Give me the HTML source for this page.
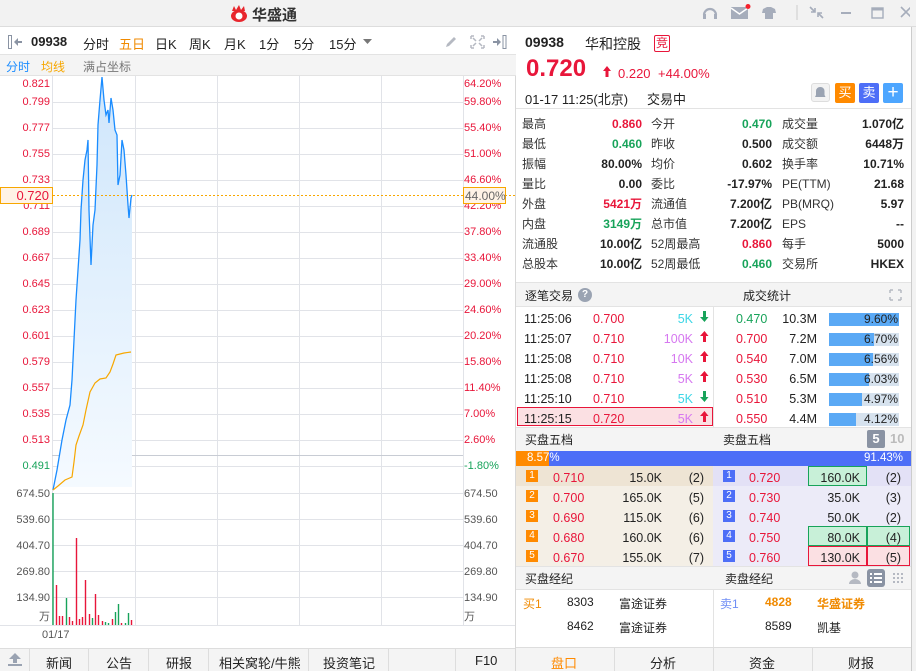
<!DOCTYPE html>
<html><head><meta charset="utf-8"><style>
*{margin:0;padding:0;box-sizing:border-box}
body{width:916px;height:671px;overflow:hidden;background:#fff;font-family:"Liberation Sans","Noto Sans CJK SC",sans-serif;font-size:12px;color:#222;position:relative}
.a{position:absolute;white-space:nowrap}
.r{color:#e8163a}.g{color:#17a35a}.b{color:#1a8cff}.o{color:#f08a00}.gr{color:#777}
.tl{text-align:right}
</style></head><body>
<div class="a" style="left:0;top:0;width:916px;height:27px;background:#f2f2f2;border-bottom:1px solid #ddd"></div>
<svg class="a" style="left:228px;top:5px" width="22" height="17" viewBox="0 0 22 17"><path d="M3 11a8 6 0 1 0 16 0a8 6 0 1 0 -16 0z" fill="#e8262d"/><circle cx="11" cy="11" r="3.5" fill="#fff"/><path d="M4 6l2-5 2 4 3-5 2 5 3-4 1 5" fill="#e8262d"/></svg>
<div class="a" style="left:252px;top:4px;font-size:15px;font-weight:bold;color:#333">华盛通</div>
<svg class="a" style="left:700px;top:4px" width="210" height="18" viewBox="0 0 210 18">
<path d="M4 11a6 6 0 0 1 12 0" fill="none" stroke="#a6adbb" stroke-width="2.2"/><rect x="3" y="10" width="3" height="5" fill="#a6adbb"/><rect x="14" y="10" width="3" height="5" fill="#a6adbb"/>
<rect x="31" y="3" width="17" height="12" fill="#a6adbb"/><path d="M31 4l8.5 6 8.5-6" fill="none" stroke="#fff" stroke-width="1.5"/><circle cx="48" cy="2.5" r="2.5" fill="#f5222d"/>
<path d="M63 5l4-2h4l4 2 1 4-3 0v6h-8v-6l-3 0z" fill="#a6adbb"/>
<line x1="97" y1="1" x2="97" y2="16" stroke="#ccc"/>
<path d="M110 3l5 5M115 4v4h-4M123 14l-5-5M118 13v-4h4" stroke="#a6adbb" stroke-width="1.6" fill="none"/>
<rect x="141" y="8" width="10" height="2" fill="#a6adbb"/>
<rect x="172" y="4" width="11" height="10" fill="none" stroke="#a6adbb" stroke-width="1.4"/><rect x="172" y="4" width="11" height="2.5" fill="#a6adbb"/>
<path d="M201 3l10 10M211 3l-10 10" stroke="#a6adbb" stroke-width="1.6"/></svg>
<div class="a" style="left:911px;top:27px;width:5px;height:644px;background:#f2f2f2;border-left:1px solid #ccc"></div>

<div class="a" style="left:0;top:27px;width:516px;height:28px;background:#fff;border-bottom:1px solid #e3e3e3"></div>
<svg class="a" style="left:8px;top:35px" width="16" height="14"><rect x="0.5" y="0.5" width="3" height="13" fill="none" stroke="#8a93a3"/><path d="M6 7l4-4v8z" fill="#8a93a3"/><rect x="9" y="6" width="5" height="2" fill="#8a93a3"/></svg>
<div class="a" style="left:31px;top:34px;font-weight:bold;font-size:13px">09938</div>
<div class="a" style="left:83px;top:34px;font-size:13px">分时</div>
<div class="a o" style="left:119px;top:34px;font-size:13px">五日</div>
<div class="a" style="left:155px;top:34px;font-size:13px">日K</div>
<div class="a" style="left:189px;top:34px;font-size:13px">周K</div>
<div class="a" style="left:224px;top:34px;font-size:13px">月K</div>
<div class="a" style="left:259px;top:34px;font-size:13px">1分</div>
<div class="a" style="left:294px;top:34px;font-size:13px">5分</div>
<div class="a" style="left:329px;top:34px;font-size:13px">15分</div>
<svg class="a" style="left:363px;top:39px" width="9" height="6"><path d="M0 0h9l-4.5 5z" fill="#777"/></svg>
<svg class="a" style="left:444px;top:35px" width="64" height="14"><path d="M2 12l1-3 7-7 2 2-7 7z" fill="#b5b9c2"/><path d="M27 1h3M27 1v3M40 1h-3M40 1v3M27 13h3M27 13v-3M40 13h-3M40 13v-3M29 3l3 3M38 3l-3 3M29 11l3-3M38 11l-3-3" stroke="#b5b9c2" stroke-width="1.5"/><rect x="59" y="0.5" width="3" height="13" fill="none" stroke="#8a93a3"/><path d="M57 7l-4-4v8z" fill="#8a93a3"/><rect x="49" y="6" width="5" height="2" fill="#8a93a3"/></svg>
<div class="a" style="left:0;top:55px;width:516px;height:21px;background:#f4f4f4;border-bottom:1px solid #e3e3e3"></div>
<div class="a b" style="left:6px;top:58px">分时</div>
<div class="a" style="left:41px;top:58px;color:#f7a700">均线</div>
<div class="a gr" style="left:83px;top:58px">满占坐标</div>

<svg class="a" style="left:0;top:76px" width="516" height="595" viewBox="0 76 516 595">
<defs><linearGradient id="f" x1="0" y1="0" x2="0" y2="1"><stop offset="0" stop-color="#cfe6fb"/><stop offset="1" stop-color="#f5faff"/></linearGradient></defs>
<g stroke="#e1e3e8" stroke-width="1">
<line x1="52.5" y1="76" x2="52.5" y2="625"/><line x1="135.5" y1="76" x2="135.5" y2="625"/><line x1="217.5" y1="76" x2="217.5" y2="625"/><line x1="299.5" y1="76" x2="299.5" y2="625"/><line x1="381.5" y1="76" x2="381.5" y2="625"/><line x1="463.5" y1="76" x2="463.5" y2="625"/>
<line x1="52" y1="102.5" x2="463" y2="102.5"/><line x1="52" y1="128.5" x2="463" y2="128.5"/><line x1="52" y1="154.5" x2="463" y2="154.5"/><line x1="52" y1="180.5" x2="463" y2="180.5"/><line x1="52" y1="206.5" x2="463" y2="206.5"/><line x1="52" y1="232.5" x2="463" y2="232.5"/><line x1="52" y1="258.5" x2="463" y2="258.5"/><line x1="52" y1="284.5" x2="463" y2="284.5"/><line x1="52" y1="310.5" x2="463" y2="310.5"/><line x1="52" y1="336.5" x2="463" y2="336.5"/><line x1="52" y1="362.5" x2="463" y2="362.5"/><line x1="52" y1="388.5" x2="463" y2="388.5"/><line x1="52" y1="414.5" x2="463" y2="414.5"/><line x1="52" y1="440.5" x2="463" y2="440.5"/><line x1="52" y1="466.5" x2="463" y2="466.5"/>
<line x1="52" y1="493.5" x2="463" y2="493.5"/><line x1="52" y1="519.5" x2="463" y2="519.5"/><line x1="52" y1="545.5" x2="463" y2="545.5"/><line x1="52" y1="571.5" x2="463" y2="571.5"/><line x1="52" y1="597.5" x2="463" y2="597.5"/>
<line x1="0" y1="625.5" x2="516" y2="625.5"/>
</g>
<line x1="52" y1="455.5" x2="463" y2="455.5" stroke="#c8ccd4"/>
<path d="M53 490L57 470L62 440L66 420L70 405L72 380L74 340L76 300L78 270L80 240L81 210L83 180L85 160L87 150L88 140L89 210L91 265L93 225L95 210L97 165L98 125L100 100L102 77L104 100L106 115L108 110L109 123L111 98L113 110L115 130L117 135L118 185L120 175L122 140L124 150L126 175L128 205L129 218L131 198L132 195L132 487L53 487Z" fill="url(#f)"/>
<path d="M53 490L57 470L62 440L66 420L70 405L72 380L74 340L76 300L78 270L80 240L81 210L83 180L85 160L87 150L88 140L89 210L91 265L93 225L95 210L97 165L98 125L100 100L102 77L104 100L106 115L108 110L109 123L111 98L113 110L115 130L117 135L118 185L120 175L122 140L124 150L126 175L128 205L129 218L131 198L132 195" fill="none" stroke="#1a8cff" stroke-width="1.3"/>
<path d="M53 490L58 486L65 480L72 477L74 462L76 445L79 436L83 425L86 410L90 392L95 383L100 379L106 378L110 372L113 364L116 355L120 354L124 353L131 352" fill="none" stroke="#f7a700" stroke-width="1.2"/>
<line x1="53" y1="195.5" x2="516" y2="195.5" stroke="#f7a700" stroke-dasharray="2,2"/>
<g stroke-width="1.4">
<line x1="53" y1="493" x2="53" y2="625" stroke="#17a35a"/>
<line x1="56.5" y1="585" x2="56.5" y2="625" stroke="#e8163a"/><line x1="59.5" y1="616" x2="59.5" y2="625" stroke="#e8163a"/><line x1="62.5" y1="616" x2="62.5" y2="625" stroke="#e8163a"/><line x1="66.5" y1="598" x2="66.5" y2="625" stroke="#17a35a"/><line x1="69.5" y1="617" x2="69.5" y2="625" stroke="#e8163a"/><line x1="72.5" y1="621" x2="72.5" y2="625" stroke="#e8163a"/><line x1="76.5" y1="538" x2="76.5" y2="625" stroke="#e8163a"/><line x1="79.5" y1="619" x2="79.5" y2="625" stroke="#e8163a"/><line x1="82.5" y1="617" x2="82.5" y2="625" stroke="#e8163a"/><line x1="85.5" y1="580" x2="85.5" y2="625" stroke="#e8163a"/><line x1="89.5" y1="614" x2="89.5" y2="625" stroke="#e8163a"/><line x1="92.5" y1="618" x2="92.5" y2="625" stroke="#17a35a"/><line x1="95.5" y1="594" x2="95.5" y2="625" stroke="#e8163a"/><line x1="98.5" y1="615" x2="98.5" y2="625" stroke="#e8163a"/><line x1="102.5" y1="621" x2="102.5" y2="625" stroke="#e8163a"/><line x1="105.5" y1="622" x2="105.5" y2="625" stroke="#17a35a"/><line x1="108.5" y1="623" x2="108.5" y2="625" stroke="#17a35a"/><line x1="112.5" y1="619" x2="112.5" y2="625" stroke="#e8163a"/><line x1="115.5" y1="612" x2="115.5" y2="625" stroke="#17a35a"/><line x1="118.5" y1="604" x2="118.5" y2="625" stroke="#17a35a"/><line x1="121.5" y1="623" x2="121.5" y2="625" stroke="#e8163a"/><line x1="125.5" y1="623" x2="125.5" y2="625" stroke="#17a35a"/><line x1="128.5" y1="613" x2="128.5" y2="625" stroke="#17a35a"/><line x1="131.5" y1="620" x2="131.5" y2="625" stroke="#e8163a"/>
</g>
<g font-family="Liberation Sans,sans-serif" font-size="11" fill="#e8163a" text-anchor="end">
<text x="50" y="87">0.821</text><text x="50" y="105">0.799</text><text x="50" y="131">0.777</text><text x="50" y="157">0.755</text><text x="50" y="183">0.733</text><text x="50" y="209">0.711</text><text x="50" y="235">0.689</text><text x="50" y="261">0.667</text><text x="50" y="287">0.645</text><text x="50" y="313">0.623</text><text x="50" y="339">0.601</text><text x="50" y="365">0.579</text><text x="50" y="391">0.557</text><text x="50" y="417">0.535</text><text x="50" y="443">0.513</text><text x="50" y="469" fill="#17a35a">0.491</text>
<g fill="#555"><text x="50" y="497">674.50</text><text x="50" y="523">539.60</text><text x="50" y="549">404.70</text><text x="50" y="575">269.80</text><text x="50" y="601">134.90</text><text x="50" y="620">万</text></g>
</g>
<g font-family="Liberation Sans,sans-serif" font-size="11" fill="#e8163a">
<text x="464" y="87">64.20%</text><text x="464" y="105">59.80%</text><text x="464" y="131">55.40%</text><text x="464" y="157">51.00%</text><text x="464" y="183">46.60%</text><text x="464" y="209">42.20%</text><text x="464" y="235">37.80%</text><text x="464" y="261">33.40%</text><text x="464" y="287">29.00%</text><text x="464" y="313">24.60%</text><text x="464" y="339">20.20%</text><text x="464" y="365">15.80%</text><text x="464" y="391">11.40%</text><text x="464" y="417">7.00%</text><text x="464" y="443">2.60%</text><text x="464" y="469" fill="#17a35a">-1.80%</text>
<g fill="#555"><text x="464" y="497">674.50</text><text x="464" y="523">539.60</text><text x="464" y="549">404.70</text><text x="464" y="575">269.80</text><text x="464" y="601">134.90</text><text x="464" y="620">万</text></g>
</g>
<rect x="0.5" y="187.5" width="52" height="16" fill="#fff3e6" stroke="#f7a700"/>
<text x="49" y="200" font-family="Liberation Sans,sans-serif" font-size="13" fill="#e8163a" text-anchor="end">0.720</text>
<rect x="463.5" y="187.5" width="42" height="16" fill="#fff3e6" stroke="#f7a700"/>
<text x="465" y="200" font-family="Liberation Sans,sans-serif" font-size="12" fill="#666">44.00%</text>
<text x="42" y="638" font-family="Liberation Sans,sans-serif" font-size="11" fill="#555">01/17</text>
<line x1="515.5" y1="27" x2="515.5" y2="671" stroke="#d8d8d8"/>
</svg>

<div class="a" style="left:0;top:648px;width:515px;height:23px;background:#f4f4f4;border-top:1px solid #ddd"></div>
<svg class="a" style="left:7px;top:652px" width="16" height="15"><path d="M8 1l6 6h-4v4H6V7H2z" fill="#9aa3b2"/><rect x="1" y="12" width="14" height="2" fill="#9aa3b2"/></svg>
<div class="a" style="left:29px;top:648px;height:23px;border-left:1px solid #ddd"></div>
<div class="a" style="left:88px;top:648px;height:23px;border-left:1px solid #ddd"></div>
<div class="a" style="left:148px;top:648px;height:23px;border-left:1px solid #ddd"></div>
<div class="a" style="left:208px;top:648px;height:23px;border-left:1px solid #ddd"></div>
<div class="a" style="left:308px;top:648px;height:23px;border-left:1px solid #ddd"></div>
<div class="a" style="left:388px;top:648px;height:23px;border-left:1px solid #ddd"></div>
<div class="a" style="left:455px;top:648px;height:23px;border-left:1px solid #ddd"></div>
<div class="a" style="left:46px;top:653px;font-size:13px">新闻</div>
<div class="a" style="left:106px;top:653px;font-size:13px">公告</div>
<div class="a" style="left:166px;top:653px;font-size:13px">研报</div>
<div class="a" style="left:219px;top:653px;font-size:13px">相关窝轮/牛熊</div>
<div class="a" style="left:323px;top:653px;font-size:13px">投资笔记</div>
<div class="a" style="left:475px;top:653px;font-size:13px">F10</div>

<div class="a" style="left:525px;top:34px;font-size:14px;font-weight:bold">09938</div>
<div class="a" style="left:585px;top:34px;font-size:14px">华和控股</div>
<div class="a r" style="left:654px;top:35px;width:16px;height:17px;border:1px solid #e8163a;border-radius:2px;font-size:12px;line-height:15px;text-align:center">竞</div>
<div class="a r" style="left:526px;top:55px;font-size:24px;font-weight:bold">0.720</div>
<svg class="a" style="left:603px;top:66px" width="8" height="11"><path d="M4 0l4 5H5.5v6h-3V5H0z" fill="#e8163a"/></svg>
<div class="a r" style="left:618px;top:66px;font-size:13px">0.220</div>
<div class="a r" style="left:658px;top:66px;font-size:13px">+44.00%</div>
<div class="a" style="left:525px;top:89px;font-size:13px">01-17  11:25(北京)</div>
<div class="a" style="left:647px;top:89px;font-size:13px">交易中</div>
<div class="a" style="left:811px;top:83px;width:19px;height:19px;border:1px solid #ddd;border-radius:3px;background:#f3f3f3"></div>
<svg class="a" style="left:815px;top:86px" width="11" height="13"><path d="M5.5 1a4 4 0 0 1 4 4v4l1 2H0l1-2V5a4 4 0 0 1 4.5-4z" fill="#9aa3b2"/></svg>
<div class="a" style="left:835px;top:83px;width:20px;height:20px;background:#ff8a00;border-radius:2px;color:#fff;text-align:center;line-height:20px;font-size:13px">买</div>
<div class="a" style="left:859px;top:83px;width:20px;height:20px;background:#4d6ef7;border-radius:2px;color:#fff;text-align:center;line-height:20px;font-size:13px">卖</div>
<div class="a" style="left:883px;top:83px;width:20px;height:20px;background:#4da6ff;border-radius:2px;color:#fff;text-align:center;line-height:19px;font-size:19px">+</div>
<div class="a" style="left:516px;top:108px;width:395px;border-top:1px solid #e3e3e3"></div>

<div class="a" style="left:522px;top:114px;line-height:20px;font-size:12px;color:#333">最高<br>最低<br>振幅<br>量比<br>外盘<br>内盘<br>流通股<br>总股本</div>
<div class="a tl" style="left:580px;top:114px;width:62px;line-height:20px;font-weight:bold"><span class="r">0.860</span><br><span class="g">0.460</span><br>80.00%<br>0.00<br><span class="r">5421万</span><br><span class="g">3149万</span><br>10.00亿<br>10.00亿</div>
<div class="a" style="left:651px;top:114px;line-height:20px;color:#333">今开<br>昨收<br>均价<br>委比<br>流通值<br>总市值<br>52周最高<br>52周最低</div>
<div class="a tl" style="left:700px;top:114px;width:72px;line-height:20px;font-weight:bold"><span class="g">0.470</span><br>0.500<br>0.602<br>-17.97%<br>7.200亿<br>7.200亿<br><span class="r">0.860</span><br><span class="g">0.460</span></div>
<div class="a" style="left:782px;top:114px;line-height:20px;color:#333">成交量<br>成交额<br>换手率<br>PE(TTM)<br>PB(MRQ)<br>EPS<br>每手<br>交易所</div>
<div class="a tl" style="left:830px;top:114px;width:74px;line-height:20px;font-weight:bold">1.070亿<br>6448万<br>10.71%<br>21.68<br>5.97<br>--<br>5000<br>HKEX</div>

<div class="a" style="left:516px;top:282px;width:395px;height:25px;background:#f4f4f4;border-top:1px solid #e3e3e3;border-bottom:1px solid #e3e3e3"></div>
<div class="a" style="left:525px;top:287px">逐笔交易</div>
<div class="a" style="left:578px;top:288px;width:14px;height:14px;border-radius:7px;background:#9aa3b2;color:#fff;font-size:10px;text-align:center;line-height:14px;font-weight:bold">?</div>
<div class="a" style="left:743px;top:287px">成交统计</div>
<svg class="a" style="left:889px;top:289px" width="13" height="12"><path d="M1 1h3M1 1v3M12 1h-3M12 1v3M1 11h3M1 11v-3M12 11h-3M12 11v-3" stroke="#b5b9c2" stroke-width="1.5"/></svg>
<div class="a" style="left:713px;top:307px;height:120px;border-left:1px solid #e3e3e3"></div>
<div class="a" style="left:517px;top:407px;width:196px;height:19px;background:#fbe0e3;border:1px solid #e8163a"></div>
<div class="a" style="left:524px;top:309px;line-height:20px;font-size:12.5px">11:25:06<br>11:25:07<br>11:25:08<br>11:25:08<br>11:25:10<br>11:25:15</div>
<div class="a r" style="left:593px;top:309px;line-height:20px;font-size:12.5px">0.700<br>0.710<br>0.710<br>0.710<br>0.710<br>0.720</div>
<div class="a tl" style="left:650px;top:309px;width:43px;line-height:20px;font-size:12.5px"><span style="color:#3cd6e6">5K</span><br><span style="color:#d678f0">100K</span><br><span style="color:#d678f0">10K</span><br><span style="color:#d678f0">5K</span><br><span style="color:#3cd6e6">5K</span><br><span style="color:#d678f0">5K</span></div>
<svg class="a" style="left:700px;top:311px" width="9" height="115"><path d="M4.5 11l4-5H6V0H3v6H0z" fill="#17a35a"/><path d="M4.5 20l4 5H6v6H3v-6H0z" fill="#e8163a"/><path d="M4.5 40l4 5H6v6H3v-6H0z" fill="#e8163a"/><path d="M4.5 60l4 5H6v6H3v-6H0z" fill="#e8163a"/><path d="M4.5 91l4-5H6v-6H3v6H0z" fill="#17a35a"/><path d="M4.5 100l4 5H6v6H3v-6H0z" fill="#e8163a"/></svg>
<div class="a" style="left:736px;top:309px;line-height:20px;font-size:12.5px"><span class="g">0.470</span><br><span class="r">0.700<br>0.540<br>0.530<br>0.510<br>0.550</span></div>
<div class="a tl" style="left:770px;top:309px;width:47px;line-height:20px;font-size:12.5px">10.3M<br>7.2M<br>7.0M<br>6.5M<br>5.3M<br>4.4M</div>
<div class="a" style="left:829px;top:313px;width:70px;height:13px;background:#d6e2ee"><div style="width:70px;height:13px;background:#5aa9f5"></div></div>
<div class="a" style="left:829px;top:333px;width:70px;height:13px;background:#d6e2ee"><div style="width:45px;height:13px;background:#5aa9f5"></div></div>
<div class="a" style="left:829px;top:353px;width:70px;height:13px;background:#d6e2ee"><div style="width:44px;height:13px;background:#5aa9f5"></div></div>
<div class="a" style="left:829px;top:373px;width:70px;height:13px;background:#d6e2ee"><div style="width:40px;height:13px;background:#5aa9f5"></div></div>
<div class="a" style="left:829px;top:393px;width:70px;height:13px;background:#d6e2ee"><div style="width:33px;height:13px;background:#5aa9f5"></div></div>
<div class="a" style="left:829px;top:413px;width:70px;height:13px;background:#d6e2ee"><div style="width:27px;height:13px;background:#5aa9f5"></div></div>
<div class="a tl" style="left:830px;top:309px;width:68px;line-height:20px;font-size:12px">9.60%<br>6.70%<br>6.56%<br>6.03%<br>4.97%<br>4.12%</div>

<div class="a" style="left:516px;top:427px;width:395px;height:24px;background:#f4f4f4;border-top:1px solid #e3e3e3"></div>
<div class="a" style="left:525px;top:431px">买盘五档</div>
<div class="a" style="left:723px;top:431px">卖盘五档</div>
<div class="a" style="left:867px;top:430px;width:18px;height:18px;background:#8a93a3;border-radius:2px;color:#fff;font-weight:bold;text-align:center;line-height:18px;font-size:13px">5</div>
<div class="a" style="left:890px;top:431px;color:#bbb;font-weight:bold;font-size:13px">10</div>
<div class="a" style="left:516px;top:451px;width:395px;height:15px;background:#4d6ef7"></div>
<div class="a" style="left:516px;top:451px;width:33px;height:15px;background:#ff8a00"></div>
<div class="a" style="left:527px;top:451px;color:#fff;font-size:11.5px;line-height:15px">8.57%</div>
<div class="a" style="left:864px;top:451px;color:#fff;font-size:11.5px;line-height:15px">91.43%</div>
<div class="a" style="left:516px;top:466px;width:197px;height:100px;background:#f4efe6"></div>
<div class="a" style="left:516px;top:466px;width:197px;height:20px;background:#eee4d4"></div>
<div class="a" style="left:713px;top:466px;width:198px;height:100px;background:#ecebf8"></div>
<div class="a" style="left:713px;top:466px;width:198px;height:20px;background:#e3e1f6"></div>
<div class="a" style="left:808px;top:466px;width:59px;height:20px;background:#c8f0d8;border:1px solid #17a35a"></div>
<div class="a" style="left:808px;top:526px;width:59px;height:20px;background:#c8f0d8;border:1px solid #17a35a"></div>
<div class="a" style="left:867px;top:526px;width:43px;height:20px;background:#c8f0d8;border:1px solid #17a35a"></div>
<div class="a" style="left:808px;top:546px;width:59px;height:20px;background:#fbe0e3;border:1px solid #e8163a"></div>
<div class="a" style="left:867px;top:546px;width:43px;height:20px;background:#fbe0e3;border:1px solid #e8163a"></div>
<div class="a" style="left:526px;top:470px;line-height:20px">
<div style="width:12px;height:12px;background:#ff8a00;color:#fff;font-size:10px;text-align:center;line-height:12px;margin-bottom:8px">1</div><div style="width:12px;height:12px;background:#ff8a00;color:#fff;font-size:10px;text-align:center;line-height:12px;margin-bottom:8px">2</div><div style="width:12px;height:12px;background:#ff8a00;color:#fff;font-size:10px;text-align:center;line-height:12px;margin-bottom:8px">3</div><div style="width:12px;height:12px;background:#ff8a00;color:#fff;font-size:10px;text-align:center;line-height:12px;margin-bottom:8px">4</div><div style="width:12px;height:12px;background:#ff8a00;color:#fff;font-size:10px;text-align:center;line-height:12px">5</div></div>
<div class="a" style="left:723px;top:470px">
<div style="width:12px;height:12px;background:#4d6ef7;color:#fff;font-size:10px;text-align:center;line-height:12px;margin-bottom:8px">1</div><div style="width:12px;height:12px;background:#4d6ef7;color:#fff;font-size:10px;text-align:center;line-height:12px;margin-bottom:8px">2</div><div style="width:12px;height:12px;background:#4d6ef7;color:#fff;font-size:10px;text-align:center;line-height:12px;margin-bottom:8px">3</div><div style="width:12px;height:12px;background:#4d6ef7;color:#fff;font-size:10px;text-align:center;line-height:12px;margin-bottom:8px">4</div><div style="width:12px;height:12px;background:#4d6ef7;color:#fff;font-size:10px;text-align:center;line-height:12px">5</div></div>
<div class="a r" style="left:553px;top:468px;line-height:20px;font-size:12.5px">0.710<br>0.700<br>0.690<br>0.680<br>0.670</div>
<div class="a tl" style="left:610px;top:468px;width:52px;line-height:20px;font-size:12.5px">15.0K<br>165.0K<br>115.0K<br>160.0K<br>155.0K</div>
<div class="a tl" style="left:680px;top:468px;width:24px;line-height:20px;font-size:12.5px">(2)<br>(5)<br>(6)<br>(6)<br>(7)</div>
<div class="a r" style="left:749px;top:468px;line-height:20px;font-size:12.5px">0.720<br>0.730<br>0.740<br>0.750<br>0.760</div>
<div class="a tl" style="left:805px;top:468px;width:55px;line-height:20px;font-size:12.5px">160.0K<br>35.0K<br>50.0K<br>80.0K<br>130.0K</div>
<div class="a tl" style="left:876px;top:468px;width:25px;line-height:20px;font-size:12.5px">(2)<br>(3)<br>(2)<br>(4)<br>(5)</div>

<div class="a" style="left:516px;top:566px;width:395px;height:24px;background:#f4f4f4;border-top:1px solid #e3e3e3;border-bottom:1px solid #e3e3e3"></div>
<div class="a" style="left:525px;top:570px">买盘经纪</div>
<div class="a" style="left:725px;top:570px">卖盘经纪</div>
<svg class="a" style="left:848px;top:569px" width="58" height="18"><circle cx="7" cy="6" r="3.5" fill="#b5b9c2"/><path d="M1 15a6 5 0 0 1 12 0z" fill="#b5b9c2"/><rect x="19" y="0" width="18" height="18" rx="3" fill="#8a93a3"/><path d="M22 5h2M26 5h8M22 9h2M26 9h8M22 13h2M26 13h8" stroke="#fff" stroke-width="2"/><g fill="#b5b9c2"><rect x="45" y="4" width="2" height="2"/><rect x="49" y="4" width="2" height="2"/><rect x="53" y="4" width="2" height="2"/><rect x="45" y="8" width="2" height="2"/><rect x="49" y="8" width="2" height="2"/><rect x="53" y="8" width="2" height="2"/><rect x="45" y="12" width="2" height="2"/><rect x="49" y="12" width="2" height="2"/><rect x="53" y="12" width="2" height="2"/></g></svg>
<div class="a" style="left:713px;top:590px;height:57px;border-left:1px solid #e3e3e3"></div>
<div class="a o" style="left:523px;top:595px">买1</div>
<div class="a" style="left:567px;top:595px">8303</div>
<div class="a" style="left:619px;top:595px">富途证券</div>
<div class="a" style="left:567px;top:619px">8462</div>
<div class="a" style="left:619px;top:619px">富途证券</div>
<div class="a" style="left:720px;top:595px;color:#6f8ef5">卖1</div>
<div class="a o" style="left:765px;top:595px;font-weight:bold">4828</div>
<div class="a o" style="left:817px;top:595px;font-weight:bold">华盛证券</div>
<div class="a" style="left:765px;top:619px">8589</div>
<div class="a" style="left:817px;top:619px">凯基</div>
<div class="a" style="left:516px;top:647px;width:395px;height:24px;background:#f4f4f4;border-top:1px solid #ddd"></div>
<div class="a" style="left:614px;top:648px;height:23px;border-left:1px solid #ddd"></div>
<div class="a" style="left:713px;top:648px;height:23px;border-left:1px solid #ddd"></div>
<div class="a" style="left:812px;top:648px;height:23px;border-left:1px solid #ddd"></div>
<div class="a" style="left:551px;top:653px;font-size:13px;color:#ff8a00">盘口</div>
<div class="a" style="left:650px;top:653px;font-size:13px">分析</div>
<div class="a" style="left:749px;top:653px;font-size:13px">资金</div>
<div class="a" style="left:848px;top:653px;font-size:13px">财报</div>
</body></html>
